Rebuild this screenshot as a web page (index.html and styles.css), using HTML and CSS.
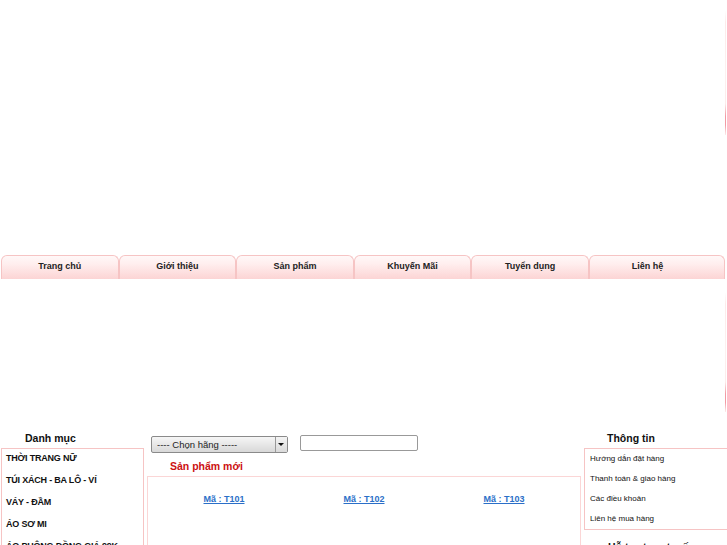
FILE: index.html
```html
<!DOCTYPE html>
<html lang="vi">
<head>
<meta charset="utf-8">
<title>Shop</title>
<link rel="stylesheet" href="styles.css">
</head>
<body>
<div class="page">
  <div class="header"></div>
  <ul class="nav">
    <li><a href="#">Trang chủ</a></li>
    <li><a href="#">Giới thiệu</a></li>
    <li><a href="#">Sản phẩm</a></li>
    <li><a href="#">Khuyến Mãi</a></li>
    <li><a href="#">Tuyển dụng</a></li>
    <li class="last"><a href="#">Liên hệ</a></li>
  </ul>
  <div class="banner"></div>
  <div class="main">
    <div class="left">
      <h3 class="col-title">Danh mục</h3>
      <ul class="cat">
        <li>THỜI TRANG NỮ</li>
        <li>TÚI XÁCH - BA LÔ - VÍ</li>
        <li>VÁY - ĐẦM</li>
        <li>ÁO SƠ MI</li>
        <li>ÁO PHÔNG ĐỒNG GIÁ 99K</li>
      </ul>
    </div>
    <div class="center">
      <div class="search">
        <span class="sel"><select><option>---- Chọn hãng -----</option></select></span>
        <input type="text" class="txt">
      </div>
      <h2 class="new">Sản phẩm mới</h2>
      <div class="products">
        <div class="prod"><a href="#">Mã : T101</a></div>
        <div class="prod"><a href="#">Mã : T102</a></div>
        <div class="prod"><a href="#">Mã : T103</a></div>
      </div>
    </div>
    <div class="right">
      <h3 class="col-title info-title">Thông tin</h3>
      <ul class="info">
        <li>Hướng dẫn đặt hàng</li>
        <li>Thanh toán &amp; giao hàng</li>
        <li>Các điều khoản</li>
        <li>Liên hệ mua hàng</li>
      </ul>
      <h3 class="col-title support">Hỗ trợ trực tuyến</h3>
    </div>
  </div>
  <span class="edge edge1"></span>
  <span class="edge edge2"></span>
</div>
</body>
</html>
```
FILE: styles.css
```css
html, body {
  margin: 0;
  padding: 0;
  overflow: hidden;
  background: #fff;
}
body {
  font-family: "Liberation Sans", Arial, sans-serif;
  color: #111;
}
.page {
  position: relative;
  width: 727px;
  overflow: hidden;
}
.header {
  height: 255px;
}
.nav {
  list-style: none;
  margin: 0;
  padding: 0 0 0 1px;
  display: flex;
  height: 24px;
}
.nav li {
  box-sizing: border-box;
  flex: 0 0 auto;
  width: 117.6px;
  height: 24px;
  border: 1px solid #f6c4c4;
  border-bottom: none;
  border-radius: 6px 6px 0 0;
  background: linear-gradient(#fff8f8 0%, #ffeeee 35%, #fcd4d4 100%);
  display: flex;
  align-items: center;
  justify-content: center;
}
.nav li.last {
  width: 136px;
  padding-right: 19px;
}
.nav a {
  font-size: 9px;
  font-weight: bold;
  color: #222;
  text-decoration: none;
  margin-top: -4px;
}
.banner {
  height: 148px;
}
.main {
  display: flex;
  align-items: flex-start;
}
.main > div {
  flex-shrink: 0;
}
.left {
  width: 143px;
  margin-left: 1px;
}
.col-title {
  margin: 0;
  font-size: 10.5px;
  font-weight: bold;
  color: #111;
  height: 21px;
  line-height: 23px;
  white-space: nowrap;
}
.left .col-title {
  padding-left: 24px;
}
.cat {
  list-style: none;
  margin: 0;
  padding: 0 0 0 4px;
  border: 1px solid #f6c4c4;
  height: 120px;
}
.cat li {
  font-size: 9px;
  letter-spacing: -0.2px;
  font-weight: bold;
  height: 22px;
  line-height: 19px;
}
.center {
  width: 434px;
  margin-left: 3px;
}
.search {
  display: flex;
  align-items: flex-start;
  height: 33px;
  padding-top: 9px;
  box-sizing: border-box;
  gap: 12px;
}
.sel {
  position: relative;
  display: block;
  margin-left: 4px;
  width: 137px;
  height: 17px;
}
.sel select {
  appearance: none;
  -webkit-appearance: none;
  width: 137px;
  height: 17px;
  border: 1px solid #8a8a8a;
  border-radius: 2px;
  background: linear-gradient(#f6f6f6, #d8d8d8);
  font-family: "Liberation Sans", Arial, sans-serif;
  font-size: 9.5px;
  color: #222;
  padding: 0 0 0 5px;
  margin: 0;
  display: block;
}
.sel::after {
  content: "";
  position: absolute;
  right: 1px;
  top: 1px;
  width: 11px;
  height: 15px;
  border-left: 1px solid #999;
  background: linear-gradient(#f4f4f4, #dadada);
}
.sel::before {
  content: "";
  position: absolute;
  right: 4px;
  top: 7px;
  border-left: 3px solid transparent;
  border-right: 3px solid transparent;
  border-top: 3px solid #111;
  z-index: 1;
}
.txt {
  width: 118px;
  height: 16px;
  box-sizing: border-box;
  border: 1px solid #999;
  border-radius: 2px;
  margin: -1px 0 0 0;
  padding: 0;
}
.new {
  margin: 0 0 4px 23px;
  font-size: 10.5px;
  font-weight: bold;
  color: #cc1111;
  height: 12px;
  line-height: 12px;
}
.products {
  border: 1px solid #fbd6d6;
  height: 80px;
  display: flex;
  padding: 14px 6px 0 6px;
  box-sizing: border-box;
}
.prod {
  flex: 1;
  text-align: center;
  line-height: 11px;
}
.prod a {
  font-size: 9px;
  font-weight: bold;
  color: #2b6fc8;
  text-decoration: underline;
}
.right {
  width: 146px;
  margin-left: 3px;
}
.info-title {
  padding-left: 23px;
}
.info {
  list-style: none;
  margin: 0;
  padding: 0 0 0 5px;
  border: 1px solid #f6c4c4;
  height: 80px;
}
.info li {
  font-size: 8px;
  height: 20px;
  line-height: 19px;
  color: #111;
  white-space: nowrap;
}
.support {
  padding-left: 24px;
  margin-top: 6px;
}
.edge {
  position: absolute;
  left: 725px;
  width: 1px;
  background: linear-gradient(#fff 0%, #fdeaea 10%, #fdf0f0 50%, #fdeaea 75%, #f39aa4 85%, #f39aa4 92%, #fdeaea 100%);
}
.edge1 { top: 10px; height: 125px; }
.edge2 { top: 292px; height: 120px; }
```
